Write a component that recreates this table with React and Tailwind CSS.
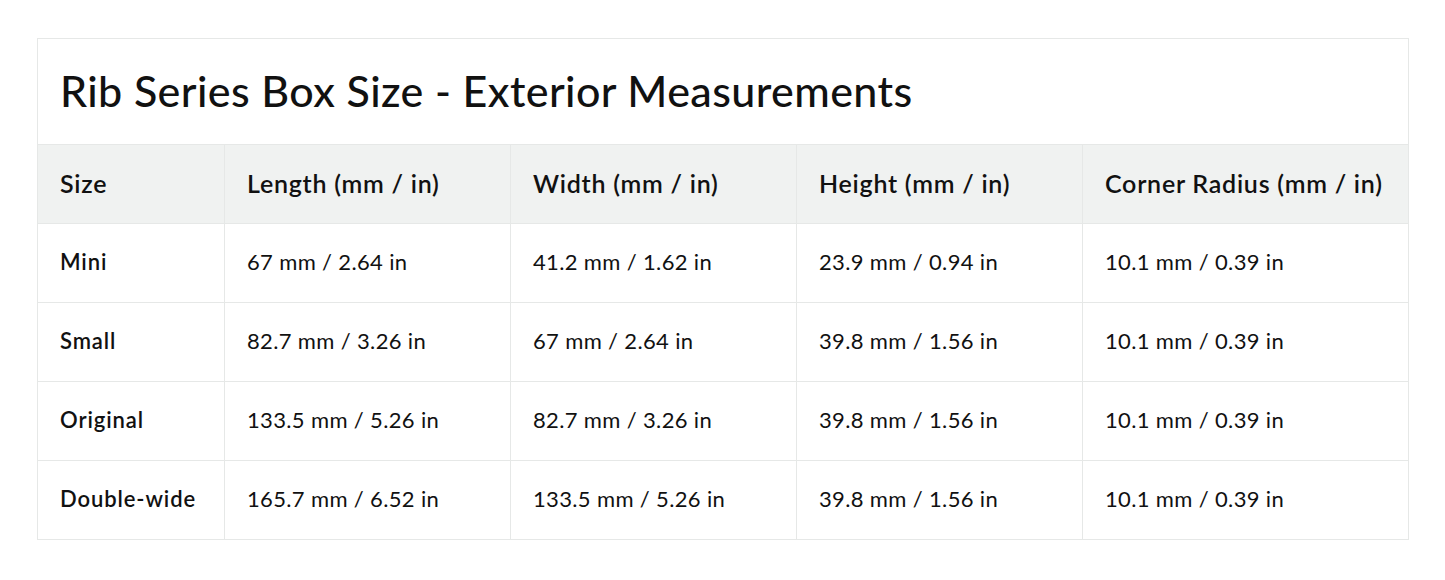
import React from 'react';

const headers = ['Size', 'Length (mm / in)', 'Width (mm / in)', 'Height (mm / in)', 'Corner Radius (mm / in)'];

const rows = [
    ['Mini', '67 mm / 2.64 in', '41.2 mm / 1.62 in', '23.9 mm / 0.94 in', '10.1 mm / 0.39 in'],
    ['Small', '82.7 mm / 3.26 in', '67 mm / 2.64 in', '39.8 mm / 1.56 in', '10.1 mm / 0.39 in'],
    ['Original', '133.5 mm / 5.26 in', '82.7 mm / 3.26 in', '39.8 mm / 1.56 in', '10.1 mm / 0.39 in'],
    ['Double-wide', '165.7 mm / 6.52 in', '133.5 mm / 5.26 in', '39.8 mm / 1.56 in', '10.1 mm / 0.39 in'],
];

const App = () => {
    return (
        <div className="min-h-screen bg-white pt-[38px] pl-[37px] text-[#111] font-['Lato','Liberation_Sans',sans-serif]">
            <table className="w-[1372px] border-collapse table-fixed">
                <colgroup>
                    <col className="w-[187px]" />
                    <col className="w-[286px]" />
                    <col className="w-[286px]" />
                    <col className="w-[286px]" />
                    <col />
                </colgroup>
                <thead>
                    <tr>
                        <th colSpan={5} className="h-[106px] border border-[#e6e8e7] text-left pl-[22px] text-[43px] font-medium tracking-[0.4px]">
                            Rib Series Box Size - Exterior Measurements
                        </th>
                    </tr>
                    <tr className="bg-[#f0f2f1]">
                        {headers.map((h) => (
                            <th key={h} className="h-[79px] border border-[#e6e8e7] text-left pl-[22px] text-[25px] font-semibold tracking-[0.75px]">
                                {h}
                            </th>
                        ))}
                    </tr>
                </thead>
                <tbody>
                    {rows.map((r) => (
                        <tr key={r[0]}>
                            {r.map((c, i) => (
                                <td
                                    key={i}
                                    className={`h-[79px] border border-[#e6e8e7] pl-[22px] pb-[3px] text-[22px] ${i === 0 ? 'font-semibold tracking-[0.9px]' : 'font-normal tracking-[0.35px]'}`}
                                >
                                    {c}
                                </td>
                            ))}
                        </tr>
                    ))}
                </tbody>
            </table>
        </div>
    );
};

export default App;
